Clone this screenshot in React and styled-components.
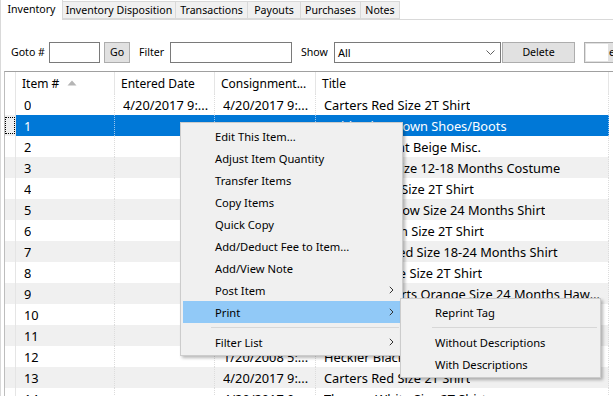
import React from "react";
import styled, { createGlobalStyle } from "styled-components";

const GlobalStyle = createGlobalStyle`
  html, body {
    margin: 0;
    padding: 0;
    background: #fff;
  }
  body {
    font-family: "Noto Sans", "Liberation Sans", sans-serif;
    color: #000;
  }
`;

const tabs = [
  { label: "Inventory", width: 63, active: true },
  { label: "Inventory Disposition", width: 114 },
  { label: "Transactions", width: 73 },
  { label: "Payouts", width: 54 },
  { label: "Purchases", width: 61 },
  { label: "Notes", width: 40 },
];

const rows = [
  { id: 0, entered: "4/20/2017 9:...", consign: "4/20/2017 9:...", title: "Carters Red Size 2T Shirt" },
  { id: 1, entered: "", consign: "4/20/2008 5:...", title: "Stride Rite Brown Shoes/Boots", selected: true },
  { id: 2, entered: "", consign: "1/20/2008 5:...", title: "Little Me Light Beige Misc." },
  { id: 3, entered: "", consign: "1/20/2008 5:...", title: "Disney Bee Size 12-18 Months Costume" },
  { id: 4, entered: "", consign: "1/20/2008 5:...", title: "Carters Blue Size 2T Shirt" },
  { id: 5, entered: "", consign: "1/20/2008 5:...", title: "Old Navy Yellow Size 24 Months Shirt" },
  { id: 6, entered: "", consign: "1/20/2008 5:...", title: "Carters Green Size 2T Shirt" },
  { id: 7, entered: "", consign: "1/20/2008 5:...", title: "Gymboree Red Size 18-24 Months Shirt" },
  { id: 8, entered: "", consign: "1/20/2008 5:...", title: "Carters White Size 2T Shirt" },
  { id: 9, entered: "", consign: "1/20/2008 5:...", title: "Hawaiian Shirts Orange Size 24 Months Hawaiian Shirt" },
  { id: 10, entered: "", consign: "1/20/2008 5:...", title: "Tommy Bahama Blue Size 24 Months Hawaiian Shirt Set" },
  { id: 11, entered: "", consign: "1/20/2008 5:...", title: "Carters Pink Size 2T Dress" },
  { id: 12, entered: "", consign: "1/20/2008 5:...", title: "Heckler Black Size 3T Pants" },
  { id: 13, entered: "", consign: "4/20/2017 9:...", title: "Carters Red Size 2T Shirt" },
  { id: 14, entered: "", consign: "4/20/2017 9...", title: "Thomas White Size 2T Shirt" },
];

const menuItems = [
  { label: "Edit This Item..." },
  { label: "Adjust Item Quantity" },
  { label: "Transfer Items" },
  { label: "Copy Items" },
  { label: "Quick Copy" },
  { label: "Add/Deduct Fee to Item..." },
  { label: "Add/View Note" },
  { label: "Post Item", sub: true },
  { label: "Print", sub: true, hot: true },
  { sep: true },
  { label: "Filter List", sub: true },
];

const printItems = [
  { label: "Reprint Tag" },
  { sep: true },
  { label: "Without Descriptions" },
  { label: "With Descriptions" },
];

const Window = styled.div`
  position: relative;
  width: 613px;
  height: 396px;
  overflow: hidden;
  background: #fff;
`;

const TabStrip = styled.div`
  display: flex;
  align-items: flex-end;
  height: 20px;
  box-sizing: border-box;
  border-bottom: 1px solid #d9d9d9;
`;

const Tab = styled.div`
  box-sizing: border-box;
  width: ${(p) => p.$width}px;
  height: ${(p) => (p.$active ? 21 : 18)}px;
  margin-bottom: ${(p) => (p.$active ? -1 : 0)}px;
  margin-left: ${(p) => (p.$active ? 0 : -1)}px;
  display: flex;
  align-items: center;
  justify-content: center;
  padding-bottom: ${(p) => (p.$active ? 2 : 0)}px;
  border: 1px solid #d9d9d9;
  border-bottom: ${(p) => (p.$active ? "none" : "1px solid #d9d9d9")};
  border-top-color: ${(p) => (p.$active ? "transparent" : "#d9d9d9")};
  background: ${(p) => (p.$active ? "#fff" : "#f0f0f0")};
  font-size: 10.6px;
  white-space: nowrap;
  position: relative;
  z-index: ${(p) => (p.$active ? 1 : 0)};
`;

const Panel = styled.div`
  height: 376px;
  border-left: 1px solid #d9d9d9;
  display: flex;
  flex-direction: column;
`;

const Toolbar = styled.div`
  display: flex;
  align-items: center;
  height: 22px;
  margin-top: 21px;
  margin-bottom: 8px;
  padding-left: 10px;
  font-size: 10.6px;
`;

const Label = styled.span`
  width: ${(p) => p.$width}px;
  margin-left: ${(p) => p.$gap || 0}px;
  flex: none;
  white-space: nowrap;
`;

const TextBox = styled.div`
  box-sizing: border-box;
  width: ${(p) => p.$width}px;
  height: 21px;
  flex: none;
  border: 1px solid #7a7a7a;
  background: #fff;
`;

const Button = styled.div`
  box-sizing: border-box;
  width: ${(p) => p.$width}px;
  height: 21px;
  margin-left: ${(p) => p.$gap || 0}px;
  flex: none;
  display: flex;
  align-items: center;
  justify-content: center;
  border: 1px solid #adadad;
  background: #e1e1e1;
`;

const ClippedButton = styled(Button)`
  justify-content: flex-start;
  padding: 1px 0 1px 1px;
`;

const Blank = styled.span`
  width: 22px;
  height: 17px;
  background: #fff;
  margin-right: 1px;
`;

const Select = styled.div`
  box-sizing: border-box;
  width: 167px;
  height: 21px;
  flex: none;
  display: flex;
  align-items: center;
  padding: 0 5px 0 3px;
  border: 1px solid #7a7a7a;
  background: #fff;
  span {
    flex: 1;
    font-size: 11px;
  }
`;

const Grid = styled.div`
  flex: 1;
  margin-left: 3px;
  border-top: 1px solid #a0a0a0;
  border-left: 1px solid #bdbdbd;
  overflow: hidden;
`;

const columns = "11px 99px 100px 101px 293px 1fr";

const HeaderRow = styled.div`
  display: grid;
  grid-template-columns: ${columns};
  height: 22px;
  font-size: 12px;
`;

const HeaderCell = styled.div`
  display: flex;
  align-items: center;
  gap: 8px;
  padding-left: 6px;
  border-right: 1px solid #e5e5e5;
  white-space: nowrap;
  overflow: hidden;
  &:first-child {
    padding-left: 0;
  }
  &:last-child {
    border-right: none;
  }
`;

const Row = styled.div`
  display: grid;
  grid-template-columns: ${columns};
  height: 21px;
  font-size: 12.8px;
  background: ${(p) => (p.$alt ? "#f0f0f0" : "#fff")};
`;

const Cell = styled.div`
  display: flex;
  align-items: center;
  padding: 0 2px 0 8px;
  min-width: 0;
  border-right: 1px dotted ${(p) => (p.$selected ? "#9cc6ee" : "#dcdcdc")};
  background: ${(p) => (p.$selected ? "#0078d7" : "transparent")};
  color: ${(p) => (p.$selected ? "#fff" : "#000")};
  span {
    white-space: nowrap;
    overflow: hidden;
    text-overflow: ellipsis;
  }
`;

const RowHead = styled.div`
  position: relative;
  border-right: 1px solid #e5e5e5;
`;

const FocusBox = styled.span`
  position: absolute;
  left: 0;
  top: 2px;
  width: 10px;
  height: 17px;
  box-sizing: border-box;
  border: 1px dotted #000;
`;

const Filler = styled.div`
  background: #fff;
`;

const Menu = styled.div`
  position: absolute;
  left: ${(p) => p.$left}px;
  top: ${(p) => p.$top}px;
  width: ${(p) => p.$width}px;
  box-sizing: border-box;
  padding: 2px;
  background: #f0f0f0;
  border: 1px solid #cccccc;
  box-shadow: 2px 2px 3px rgba(0, 0, 0, 0.28);
  font-size: 11.2px;
  z-index: ${(p) => p.$z || 5};
`;

const MenuItem = styled.div`
  display: flex;
  align-items: center;
  height: 22px;
  padding-left: 32px;
  padding-right: 6px;
  background: ${(p) => (p.$hot ? "#91c9f7" : "transparent")};
  white-space: nowrap;
  svg {
    margin-left: auto;
  }
`;

const MenuSep = styled.div`
  height: 8px;
  display: flex;
  align-items: center;
  margin-left: ${(p) => p.$indent}px;
  margin-right: 1px;
  &::after {
    content: "";
    flex: 1;
    height: 1px;
    background: #d7d7d7;
  }
`;

const SortArrow = () => (
  <svg width="10" height="6" viewBox="0 0 10 6">
    <path d="M5 0.5 L9.5 5.5 L0.5 5.5 Z" fill="#b5b5b5" />
  </svg>
);

const Chevron = () => (
  <svg width="5" height="8" viewBox="0 0 5 8">
    <path d="M0.8 0.8 L4 4 L0.8 7.2" fill="none" stroke="#333" strokeWidth="1" />
  </svg>
);

const DropArrow = () => (
  <svg width="9" height="5" viewBox="0 0 9 5">
    <path d="M0.5 0.5 L4.5 4.5 L8.5 0.5" fill="none" stroke="#606060" strokeWidth="1" />
  </svg>
);

const ContextMenu = ({ items, left, top, width, indent, z }) => (
  <Menu $left={left} $top={top} $width={width} $z={z}>
    {items.map((it, i) =>
      it.sep ? (
        <MenuSep key={i} $indent={indent} />
      ) : (
        <MenuItem key={i} $hot={it.hot}>
          {it.label}
          {it.sub && <Chevron />}
        </MenuItem>
      )
    )}
  </Menu>
);

export default function App() {
  return (
    <Window>
      <GlobalStyle />
      <TabStrip>
        {tabs.map((t) => (
          <Tab key={t.label} $width={t.width} $active={t.active}>
            {t.label}
          </Tab>
        ))}
      </TabStrip>
      <Panel>
        <Toolbar>
          <Label $width={38}>Goto #</Label>
          <TextBox $width={51} />
          <Button $width={26} $gap={4}>Go</Button>
          <Label $width={31} $gap={9}>Filter</Label>
          <TextBox $width={122} />
          <Label $width={33} $gap={9}>Show</Label>
          <Select>
            <span>All</span>
            <DropArrow />
          </Select>
          <Button $width={73} $gap={1}>Delete</Button>
          <ClippedButton $width={40} $gap={9}>
            <Blank />e
          </ClippedButton>
        </Toolbar>
        <Grid>
          <HeaderRow>
            <HeaderCell />
            <HeaderCell>
              Item #
              <SortArrow />
            </HeaderCell>
            <HeaderCell>Entered Date</HeaderCell>
            <HeaderCell>Consignment...</HeaderCell>
            <HeaderCell>Title</HeaderCell>
            <HeaderCell />
          </HeaderRow>
          {rows.map((r) => (
            <Row key={r.id} $alt={r.id % 2 === 1}>
              <RowHead>{r.selected && <FocusBox />}</RowHead>
              <Cell $selected={r.selected}>
                <span>{r.id}</span>
              </Cell>
              <Cell $selected={r.selected}>
                <span>{r.entered}</span>
              </Cell>
              <Cell $selected={r.selected}>
                <span>{r.consign}</span>
              </Cell>
              <Cell $selected={r.selected}>
                <span>{r.title}</span>
              </Cell>
              <Filler />
            </Row>
          ))}
        </Grid>
      </Panel>
      <ContextMenu items={menuItems} left={180} top={122} width={223} indent={28} />
      <ContextMenu items={printItems} left={400} top={298} width={201} indent={29} z={6} />
    </Window>
  );
}
